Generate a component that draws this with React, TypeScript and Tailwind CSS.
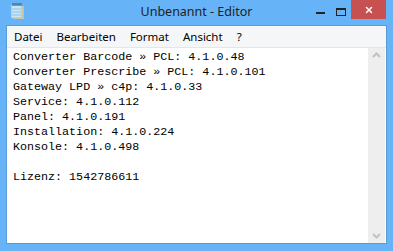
import { X } from 'lucide-react';

const lines = [
  'Converter Barcode » PCL: 4.1.0.48',
  'Converter Prescribe » PCL: 4.1.0.101',
  'Gateway LPD » c4p: 4.1.0.33',
  'Service: 4.1.0.112',
  'Panel: 4.1.0.191',
  'Installation: 4.1.0.224',
  'Konsole: 4.1.0.498',
  '',
  'Lizenz: 1542786611',
];

const menu = ['Datei', 'Bearbeiten', 'Format', 'Ansicht', '?'];

function NotepadIcon() {
  return (
    <svg width="16" height="17" viewBox="0 0 16 17">
      <rect x="4" y="3" width="11" height="13" fill="#c9c2a8" />
      <rect x="2" y="2" width="11" height="13" fill="#a9d6ee" />
      <rect x="3" y="3" width="9" height="11" fill="#c6e6f7" />
      <line x1="3" y1="6" x2="12" y2="6" stroke="#8fc3e0" />
      <line x1="3" y1="9" x2="12" y2="9" stroke="#8fc3e0" />
      <line x1="3" y1="12" x2="12" y2="12" stroke="#8fc3e0" />
      {[4, 6, 8, 10, 12].map((x) => (
        <rect key={x} x={x - 0.5} y="0" width="1" height="3" fill="#4a5560" />
      ))}
    </svg>
  );
}

export default function App() {
  return (
    <div className="w-[393px] h-[251px] bg-[#67b3f7] flex flex-col overflow-hidden" style={{ fontFamily: '"Noto Sans", sans-serif' }}>
      {/* Title bar */}
      <div className="h-[25px] flex items-start relative shrink-0">
        <div className="pl-[9px] pt-[3px]">
          <NotepadIcon />
        </div>
        <div className="absolute left-0 right-0 top-[3px] text-center text-[12.5px] leading-[18px] text-[#222]">
          Unbenannt - Editor
        </div>
        <div className="ml-auto flex items-start mr-[7px]">
          <div className="w-[24px] h-[19px] flex items-center justify-center pt-[7px]">
            <div className="w-[9px] h-[2px] bg-[#222]" />
          </div>
          <div className="w-[18px] h-[19px] flex items-center justify-center mr-[1px] pt-[4px]">
            <div className="w-[10px] h-[8px] border border-t-2 border-[#222]" />
          </div>
          <div className="w-[35px] h-[19px] bg-[#c75050] flex items-center justify-center text-white">
            <X size={10} strokeWidth={3.5} />
          </div>
        </div>
      </div>

      {/* Client area */}
      <div className="mx-[6px] mb-[7px] flex-1 border border-[#5a9ad6] bg-white flex flex-col">
        <div className="h-[22px] bg-[#f5f6f7] border-b border-b-[#e3e6ea] flex items-center pl-[7px] gap-[14px] text-[11.5px] text-black shrink-0">
          {menu.map((m) => (
            <span key={m}>{m}</span>
          ))}
        </div>
        <div className="flex flex-1">
          <div
            className="flex-1 pl-[6px] pt-[2px] text-[11.7px] leading-[15px] text-black whitespace-pre"
            style={{ fontFamily: '"Liberation Mono", monospace' }}
          >
            {lines.map((l, i) => (
              <div key={i} className="h-[15px]">{l}</div>
            ))}
          </div>
          <div className="w-[17px] bg-[#eeeeee] flex flex-col justify-between items-center py-[4px] mr-[1px]">
            <svg width="9" height="6" viewBox="0 0 9 6">
              <path d="M1 5 L4.5 1.5 L8 5" stroke="#c2c2c2" strokeWidth="2" fill="none" />
            </svg>
            <svg width="9" height="6" viewBox="0 0 9 6">
              <path d="M1 1 L4.5 4.5 L8 1" stroke="#c2c2c2" strokeWidth="2" fill="none" />
            </svg>
          </div>
        </div>
      </div>
    </div>
  );
}
